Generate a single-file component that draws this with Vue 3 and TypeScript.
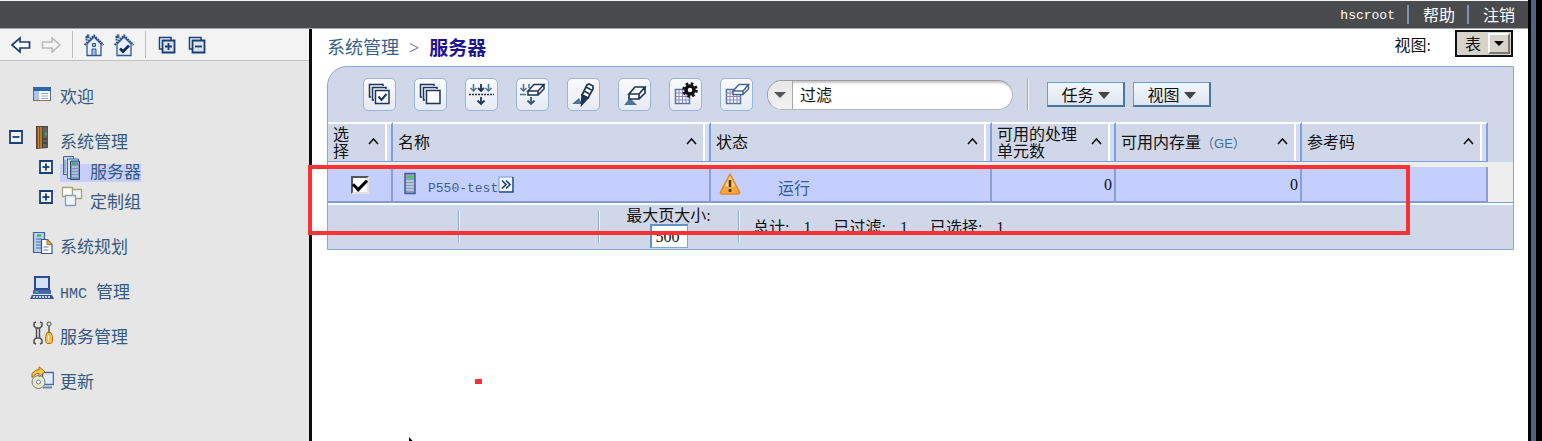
<script setup lang="ts">
import { ref } from 'vue'

interface NavItem {
  id: string
  label: string
  latin?: string
  level: 1 | 2
  expander?: 'plus' | 'minus'
  active?: boolean
}

interface Column {
  id: string
  label: string
  unit?: string
  width: number
}

const navItems: NavItem[] = [
  { id: 'welcome', label: '欢迎', level: 1 },
  { id: 'systems', label: '系统管理', level: 1, expander: 'minus' },
  { id: 'servers', label: '服务器', level: 2, expander: 'plus', active: true },
  { id: 'groups', label: '定制组', level: 2, expander: 'plus' },
  { id: 'plans', label: '系统规划', level: 1 },
  { id: 'hmc', latin: 'HMC', label: '管理', level: 1 },
  { id: 'service', label: '服务管理', level: 1 },
  { id: 'updates', label: '更新', level: 1 },
]

const tools = [
  { id: 'select-all', label: '全选' },
  { id: 'select-none', label: '取消全选' },
  { id: 'filter-row', label: '过滤行' },
  { id: 'clear-filter', label: '清除过滤' },
  { id: 'edit-sort', label: '编辑排序' },
  { id: 'clear-sort', label: '清除排序' },
  { id: 'columns', label: '配置列' },
  { id: 'reset-columns', label: '重置列' },
]

const columns: Column[] = [
  { id: 'select', label: '选择', width: 65 },
  { id: 'name', label: '名称', width: 318 },
  { id: 'status', label: '状态', width: 281 },
  { id: 'cpu', label: '可用的处理单元数', width: 124 },
  { id: 'memory', label: '可用内存量', unit: '（GE）', width: 186 },
  { id: 'code', label: '参考码', width: 186 },
]

const filterText = ref('过滤')
const pageSize = ref('500')
const selected = ref(true)
const view = ref('表')
</script>

<template>
  <div class="console">
    <div class="window">
      <header class="topbar">
        <span class="user">hscroot</span>
        <a href="#help">帮助</a>
        <a href="#logout">注销</a>
      </header>

      <div class="body">
        <aside class="sidebar">
          <div class="navbar">
            <button type="button" aria-label="后退">
              <svg width="20" height="18" viewBox="0 0 20 18"><path d="M1 9 9 2V6H18.500v6H9v4Z" fill="#fff" stroke="#173f76" stroke-width="1.700" /></svg>
            </button>
            <button type="button" aria-label="前进">
              <svg width="20" height="18" viewBox="0 0 20 18"><path d="M19 9 11 2V6H1.500v6H11v4Z" fill="#f4f4f4" stroke="#b9b9b9" stroke-width="1.500" /></svg>
            </button>
            <span class="rule"></span>
            <button type="button" aria-label="主页">
              <svg width="20" height="24" viewBox="1 0 20 24">
                <path d="M4 11v11.500h14V11l-7-7Z" fill="#e9f0fb" stroke="#31588e" stroke-width="1.300" />
                <path d="M1.500 12 11 2.500l9.500 9.500M3.500 7.500V2.500h2v3" fill="none" stroke="#31588e" stroke-width="2" stroke-dasharray="2 .6" />
                <path d="M9.500 10.500h3v3h-3zM9 16h4v6.500H9z" fill="#9db9e6" stroke="#31588e" />
              </svg>
            </button>
            <button type="button" aria-label="设为主页">
              <svg width="20" height="24" viewBox="1 0 20 24">
                <path d="M4 11v11.500h14V11l-7-7Z" fill="#e9f0fb" stroke="#31588e" stroke-width="1.300" />
                <path d="M1.500 12 11 2.500l9.500 9.500M3.500 7.500V2.500h2v3" fill="none" stroke="#31588e" stroke-width="2" stroke-dasharray="2 .6" />
                <path d="m7 15.500 3 3 6-6" fill="none" stroke="#12305f" stroke-width="2.800" />
              </svg>
            </button>
            <span class="rule"></span>
            <button type="button" aria-label="全部展开">
              <svg width="20" height="18" viewBox="-1 0 20 18">
                <path d="M4 13H1.500V1.500H13V4" fill="#fff" stroke="#173f76" stroke-width="1.500" />
                <path d="M4.500 4.500h12v12h-12z" fill="#dde1ea" stroke="#173f76" stroke-width="1.800" />
                <path d="M7 10.500h7M10.500 7v7" stroke="#173f76" stroke-width="1.800" />
              </svg>
            </button>
            <button type="button" aria-label="全部折叠">
              <svg width="20" height="18" viewBox="-1 0 20 18">
                <path d="M4 13H1.500V1.500H13V4" fill="#fff" stroke="#173f76" stroke-width="1.500" />
                <path d="M4.500 4.500h12v12h-12z" fill="#dde1ea" stroke="#173f76" stroke-width="1.800" />
                <path d="M7 10.500h7" stroke="#173f76" stroke-width="1.800" />
              </svg>
            </button>
          </div>

          <nav class="tree">
            <div v-for="item in navItems" :key="item.id" class="node" :class="'level-' + item.level">
              <button v-if="item.expander" type="button" class="expander" :aria-label="item.label">
                <svg width="14" height="14" viewBox="0 0 14 14">
                  <path d="M1 1h12v12H1z" fill="#f2f3f6" stroke="#173f76" stroke-width="1.800" />
                  <path d="M3.500 7h7" stroke="#173f76" stroke-width="1.800" />
                  <path v-if="item.expander === 'plus'" d="M7 3.500v7" stroke="#173f76" stroke-width="1.800" />
                </svg>
              </button>
              <span v-else class="expander"></span>
              <a :href="'#' + item.id" :class="{ active: item.active }">
                <svg width="24" height="24" viewBox="0 0 24 24" aria-hidden="true">
                  <g v-if="item.id === 'welcome'">
                    <path d="M3.500 6.500h17v13h-17z" fill="#fff" stroke="#55698a" />
                    <path d="M3 6h18v4H3z" fill="#2c65b1" />
                    <path d="M4 10h5v9H4z" fill="#a9c6ee" />
                    <path d="M11 12.500h7M11 15h7M11 17.500h7" stroke="#8aaee0" />
                    <path d="M3 19.500h18" stroke="#857a52" />
                  </g>
                  <g v-else-if="item.id === 'systems'">
                    <path d="M6 0h12v22l-12 1z" fill="#4b4542" />
                    <path d="M8.500 1v21M11 1v21" stroke="#d58a2c" stroke-width="1.500" />
                    <path d="M13 1h4.500v20.500H13z" fill="#63605f" />
                    <path d="M15 6.500h2v3h-2z" fill="#24b352" />
                    <path d="M13 13h4M13 17h4" stroke="#333" />
                  </g>
                  <g v-else-if="item.id === 'servers'">
                    <path d="M3.500.5h10v18h-10z" fill="#c3d5f3" stroke="#3d62a0" />
                    <path d="M7.500 3h11v19.500h-11z" fill="#d8e4fa" stroke="#3d62a0" />
                    <path d="M10.500 5h9v18.500h-9z" fill="#7f94ba" stroke="#2c4b85" />
                    <path d="M12 7.500h4" stroke="#26c832" stroke-width="2" />
                    <path d="M12 11h6M12 14h6M12 17h6M12 20h6" stroke="#dce6f7" />
                    <path d="M5 4v13" stroke="#5f7eb5" />
                  </g>
                  <g v-else-if="item.id === 'groups'" fill="#fff" stroke="#a7a476" stroke-width="1.300">
                    <path d="M2.500 1.500h10v9h-10z" />
                    <path d="M12.500 3.500h9v9h-9z" fill="#eef5ff" />
                    <path d="M5.500 9.500h10v10h-10z" fill="#eef5ff" stroke="#8d9cb0" />
                  </g>
                  <g v-else-if="item.id === 'plans'">
                    <path d="M3.500 1.500h11v20h-11z" fill="#b9cff0" stroke="#3d62a0" stroke-width="1.200" />
                    <path d="M7 4.500h4" stroke="#25b93a" stroke-width="2" />
                    <path d="M6 8h6M6 11h6M6 14h6M6 17h6" stroke="#4768a5" />
                    <path d="M11.500 8.500h6l4.500 5v9H11.500z" fill="#fff" stroke="#31588e" stroke-width="1.200" />
                    <path d="M17 8.500v5h5z" fill="#f2b744" stroke="#a97418" />
                    <path d="M13.500 16h5M13.500 19h5" stroke="#5a7cb5" />
                  </g>
                  <g v-else-if="item.id === 'hmc'">
                    <path d="M5 1h14v12H5z" fill="#d2e1f8" stroke="#2d4b95" stroke-width="2" />
                    <path d="M3 14h18v4H3z" fill="#4a66a8" />
                    <path d="M5 16h3" stroke="#28c93a" stroke-width="2" />
                    <path d="M2 19h20l2 4H0z" fill="#33539c" />
                    <path d="M3 21h18" stroke="#cbd8f2" stroke-width="2" stroke-dasharray="2 1" />
                  </g>
                  <g v-else-if="item.id === 'service'" fill="none">
                    <path d="M6 1 4 2v3l2 2h4l2-2V2l-2-1M6 23l-2-1v-3l2-2h4l2 2v3l-2 1M6.500 7v10M9.500 7v10" stroke="#4f4f4f" stroke-width="1.500" />
                    <circle cx="19" cy="3" r="2" stroke="#4f4f4f" />
                    <path d="M19 5v7" stroke="#555" stroke-width="1.500" />
                    <path d="M17 11.500h4l1.500 4v5l-1.500 2h-4l-1.500-2v-5z" fill="#f7bd45" stroke="#b3710c" />
                    <path d="M18.500 14v6" stroke="#fff3c0" />
                  </g>
                  <g v-else>
                    <path d="M12.500 6.500h11v12h-11z" fill="#dfeafb" stroke="#4b6dad" stroke-width="1.600" />
                    <path d="M13 21.500h9" stroke="#6d86b5" stroke-width="2" />
                    <circle cx="8.500" cy="16" r="6.500" fill="#e8eac8" stroke="#77817a" />
                    <circle cx="8.500" cy="16" r="2" fill="#fff" stroke="#5d79b0" />
                    <path d="M2 11.500V7.500L6 4h3V.8l6 5-6 5V7.500H6.500z" fill="#f9c64a" stroke="#a56c0e" />
                  </g>
                </svg>
                <span class="label"><span v-if="item.latin" class="latin">{{ item.latin }}&nbsp;</span>{{ item.label }}</span>
              </a>
            </div>
          </nav>
        </aside>

        <main class="content">
          <div class="heading">
            <div class="crumbs">
              <a href="#systems">系统管理</a>
              <span class="angle">&gt;</span>
              <strong>服务器</strong>
            </div>
            <label class="view-label" for="view">视图:</label>
            <div class="picker">
              <select id="view" v-model="view">
                <option>表</option>
              </select>
              <span class="picker-arrow"><i class="down small"></i></span>
            </div>
          </div>

          <section class="panel">
            <div class="toolbar">
              <div class="tools">
                <button v-for="tool in tools" :key="tool.id" type="button" class="tool" :aria-label="tool.label">
                  <svg width="27" height="27" viewBox="0 0 27 27" fill="none" stroke="#1f3557" stroke-width="1.500">
                    <g v-if="tool.id === 'select-all' || tool.id === 'select-none'">
                      <path d="M5 16H3.500V3.500H17V5" />
                      <path d="M8 19H6.500V6.500H20V8" />
                      <path d="M9.500 9.500h13.500v13h-13.500z" fill="#fff" />
                      <path v-if="tool.id === 'select-all'" d="m12.500 15.500 3 3.500 5-6" stroke-width="2" />
                    </g>
                    <g v-else-if="tool.id === 'filter-row'">
                      <path d="M5.500 3v7M2.500 7l3 3 3-3M20.500 3v7M17.500 7l3 3 3-3" stroke="#4d7298" />
                      <path d="M13 3v7M10 7l3 3 3-3M13 16v7M9.500 19.500l3.500 3.500 3.500-3.500" stroke-width="1.800" />
                      <path d="M1 13.500h25" stroke-dasharray="2 1" />
                    </g>
                    <g v-else-if="tool.id === 'clear-filter'">
                      <path d="M4.500 3v7M1.500 7l3 3 3-3M10 3v4M1 13.500h6" stroke="#4d7298" />
                      <path d="M12 16v7M8.500 19.500l3.500 3.500 3.500-3.500" stroke="#31577f" stroke-width="1.800" />
                      <path d="m9 10 6-6.500h10L19 10zM9 10v4h10v-4M19 14l6-6V3.500" fill="#fff" />
                    </g>
                    <g v-else-if="tool.id === 'edit-sort'">
                      <path d="M2 23l7-6 3 6z" fill="#4d7298" stroke="none" />
                      <path d="m12 14 5-10 2-1 4 2v3l-5 9z" fill="#fff" stroke-width="1.700" />
                      <path d="m12 14 6 3-6.500 7z" fill="#1f3557" />
                      <path d="m16 6 5.500 3M14 10l5.500 3" />
                    </g>
                    <g v-else-if="tool.id === 'clear-sort'">
                      <path d="M3 24l6-7 7 7z" fill="#4d7298" stroke="none" />
                      <path d="m8 13 6-7h10l-6 7zM8 13v5h10v-5M18 18l6-6V6" fill="#fff" stroke-width="1.700" />
                    </g>
                    <g v-else>
                      <path d="M3.500 8.500h14v14h-14z" fill="#fff" stroke="#55719c" />
                      <path d="M7 8.500v14M10.500 8.500v14M14 8.500v14M3.500 12h14M3.500 15.500h14M3.500 19h14" stroke="#8587c4" stroke-width="1" />
                      <g v-if="tool.id === 'columns'" stroke="#111">
                        <circle cx="18" cy="9" r="4" stroke-width="3.500" fill="#fff" />
                        <circle cx="18" cy="9" r="6.500" stroke-width="2.500" stroke-dasharray="2.600 2.500" />
                      </g>
                      <path v-else d="m10 10 6-6.500h9.500L20 10zM10 10v3.500h10V10M20 13.500l5.500-5.500V3.500" fill="#fff" stroke="#4a658c" />
                    </g>
                  </svg>
                </button>
              </div>
              <div class="search">
                <button type="button" aria-label="过滤选项"><i class="down"></i></button>
                <input v-model="filterText" type="text" aria-label="过滤" />
              </div>
              <div class="menus">
                <button type="button">任务<i class="down dark"></i></button>
                <button type="button">视图<i class="down dark"></i></button>
              </div>
            </div>

            <div class="grid-area">
              <table>
                <colgroup>
                  <col v-for="col in columns" :key="col.id" :style="{ width: col.width + 'px' }" />
                </colgroup>
                <thead>
                  <tr>
                    <th v-for="col in columns" :key="col.id" scope="col">
                      <div class="head">
                        <span>{{ col.label }}<span v-if="col.unit" class="unit">{{ col.unit }}</span></span>
                        <button type="button" :aria-label="'排序 ' + col.label">
                          <svg width="11" height="8" viewBox="0 0 11 8"><path d="m1 7 4.500-5L10 7" fill="none" stroke="#111" stroke-width="1.600" /></svg>
                        </button>
                      </div>
                    </th>
                  </tr>
                </thead>
                <tbody>
                  <tr class="gap"><td colspan="6"></td></tr>
                  <tr class="row">
                    <td class="center"><input v-model="selected" type="checkbox" aria-label="选择 P550-test" /></td>
                    <td>
                      <div class="name">
                        <svg width="12" height="24" viewBox="0 0 12 24">
                          <path d="M1 1.500h10v20H1z" fill="#8aa0c4" stroke="#435f8f" stroke-width="1.500" />
                          <path d="M3 5h6" stroke="#37d53f" stroke-width="2" />
                          <path d="M2 9h8M2 12h8M2 15h8M2 18h8" stroke="#dde6f6" />
                        </svg>
                        <a href="#p550">P550-test</a>
                        <button type="button" aria-label="打开菜单">
                          <svg width="16" height="17" viewBox="0 0 16 17">
                            <path d="M1 1h14v15H1z" fill="#f2f6fd" stroke="#7b98c5" />
                            <path d="M15 1v15H1" fill="none" stroke="#31588e" stroke-width="1.500" />
                            <path d="m4 4.500 4 4-4 4M8 4.500l4 4-4 4" fill="none" stroke="#1f4273" stroke-width="1.600" />
                          </svg>
                        </button>
                      </div>
                    </td>
                    <td>
                      <div class="status">
                        <svg width="22" height="24" viewBox="0 0 22 24">
                          <path d="M11 2 20.500 20q.5 2-1.500 2H3q-2 0-1.500-2Z" fill="#f9a832" stroke="#e0872a" stroke-width="1.500" stroke-linejoin="round" />
                          <path d="M11 4 6 14q5 2 10 0Z" fill="#ffd27a" />
                          <path d="M11 8v7M11 17v3" stroke="#4b3a1a" stroke-width="2.600" />
                        </svg>
                        <a href="#status">运行</a>
                      </div>
                    </td>
                    <td class="number">0</td>
                    <td class="number">0</td>
                    <td></td>
                  </tr>
                </tbody>
              </table>
            </div>

            <footer class="pager">
              <div class="cell"></div>
              <div class="cell"></div>
              <div class="cell size">
                <label for="page-size">最大页大小:</label>
                <input id="page-size" v-model="pageSize" type="text" />
              </div>
              <div class="totals">
                <span>总计:<b>1</b></span>
                <span>已过滤:<b>1</b></span>
                <span>已选择:<b>1</b></span>
              </div>
            </footer>
          </section>
        </main>
      </div>
    </div>

    <div class="frame"></div>
    <div class="outline"></div>
    <div class="dot"></div>
    <svg class="pointer" width="10" height="16" viewBox="0 0 10 16"><path d="M0 0v14l3-3 2 5 2-1-2-5h4z" fill="#000" /></svg>
  </div>
</template>

<style>
html,
body {
  margin: 0;
  overflow: hidden;
}
</style>

<style scoped>
* {
  box-sizing: border-box;
}
.console {
  position: relative;
  display: flex;
  min-height: 100vh;
  overflow: hidden;
  background: #fff;
  color: #111;
  font-family: "Liberation Serif", "Noto Sans CJK SC", serif;
  font-size: 16px;
  line-height: 17px;
}
button,
input,
select {
  margin: 0;
  padding: 0;
  border: 0;
  background: none;
  color: inherit;
  font: inherit;
}
a {
  color: inherit;
  text-decoration: none;
}
svg {
  display: block;
  flex: none;
}
.window {
  flex: 1;
  min-width: 0;
  display: flex;
  flex-direction: column;
}
.frame {
  flex: none;
  width: 14px;
  border: solid #000;
  border-width: 0 6px 0 3px;
  background: #4f6184;
}
.topbar {
  display: flex;
  align-items: center;
  justify-content: flex-end;
  height: 29px;
  padding-right: 13px;
  border-top: 1px solid #f5f5f5;
  border-bottom: 1px solid #a5a5a5;
  background: #4a4b4d;
  color: #fff;
}
.topbar a {
  margin-left: 12px;
  padding: 2px 0 0 14px;
  border-left: 2px solid #7d94b0;
}
.user {
  padding-top: 2px;
  font-family: "Liberation Mono", monospace;
  font-size: 13px;
}
.body {
  flex: 1;
  display: flex;
}
.sidebar {
  flex: none;
  width: 312px;
  border-right: 3px solid #0c0c0c;
  background: #e6e6e6;
}
.navbar {
  display: flex;
  align-items: center;
  gap: 10px;
  height: 32px;
  padding-left: 11px;
  border-bottom: 1px solid #c2c2c2;
  background: #f3f3f3;
}
.rule {
  width: 1px;
  height: 27px;
  margin: 0 1px;
  background: #bdbdbd;
}
.tree {
  padding-top: 20px;
}
.node {
  display: flex;
  gap: 7px;
  height: 30px;
  padding-left: 9px;
}
.level-2 {
  padding-left: 39px;
}
.level-1:not(:first-child),
.level-2 + .level-1 {
  margin-top: 15px;
}
.expander {
  flex: none;
  width: 14px;
  height: 14px;
  margin-top: 4px;
}
.node a {
  display: flex;
  gap: 6px;
  height: 30px;
  color: #355a83;
  font-size: 17px;
  line-height: 34px;
}
.node a.active {
  background: linear-gradient(#c6cffc, #c6cffc) 0 8px / 100% 18px no-repeat;
}
.latin {
  font-family: "Liberation Mono", monospace;
  font-size: 15px;
}
.content {
  flex: 1;
  min-width: 0;
  padding: 0 14px 0 15px;
}
.heading {
  display: flex;
  height: 37px;
  padding-right: 1px;
}
.crumbs {
  display: flex;
  flex: 1;
  align-items: center;
  gap: 10px;
  padding-top: 2px;
  color: #34608a;
  font-size: 18px;
}
.angle {
  color: #6a62ac;
}
.crumbs strong {
  color: #1d1391;
  font-size: 19px;
}
.view-label {
  padding-top: 8px;
}
.picker {
  position: relative;
  width: 58px;
  height: 27px;
  margin: 1px 0 0 24px;
}
.picker select {
  width: 100%;
  height: 100%;
  padding: 2px 0 0 8px;
  border: 2px solid #111;
  background: #d7d3cb;
  appearance: none;
}
.picker-arrow {
  position: absolute;
  top: 3px;
  right: 3px;
  display: flex;
  align-items: center;
  justify-content: center;
  width: 22px;
  height: 21px;
  border: 2px solid;
  border-color: #fff #777 #777 #fff;
  background: #d7d3cb;
  pointer-events: none;
}
.down {
  border: 6px solid transparent;
  border-top: 6px solid #555;
  border-bottom: 0;
}
.down.dark {
  border-top: 7px solid #444;
}
.down.small {
  border-width: 5px 5px 0;
  border-top-color: #000;
}
.panel {
  border: 1px solid #89a7d6;
  border-radius: 20px 0 0 0;
  background: #d0d7e8;
}
.toolbar {
  display: flex;
  align-items: center;
  height: 55px;
  padding-left: 35px;
}
.tools {
  display: flex;
  gap: 18px;
}
.tool {
  display: grid;
  place-items: center;
  width: 33px;
  height: 33px;
  border: 1px solid #98b4d8;
  border-radius: 5px;
  background: linear-gradient(#fafbfd, #e6eaf4);
}
.search {
  display: flex;
  width: 246px;
  height: 30px;
  margin-left: 14px;
  overflow: hidden;
  border: 1px solid #9a9a9a;
  border-right-color: #b5b5b5;
  border-bottom-color: #b5b5b5;
  border-radius: 15px;
  background: #fff;
  box-shadow: inset 1px 2px 2px #c8c8c8;
}
.search button {
  display: grid;
  place-items: center;
  width: 25px;
  border-right: 1px solid #a5a5a5;
  background: linear-gradient(#e8e8e8, #f1f1f1);
}
.search input {
  flex: 1;
  min-width: 0;
  padding: 2px 0 0 7px;
}
.menus {
  display: flex;
  align-items: center;
  gap: 8px;
  height: 32px;
  margin-left: 14px;
  padding-left: 19px;
  border-left: 1px solid #8fabd0;
  box-shadow: inset 1px 0 #f4f7fc;
}
.menus button {
  display: flex;
  align-items: center;
  justify-content: center;
  gap: 4px;
  width: 78px;
  height: 25px;
  padding-top: 2px;
  border: 1px solid #66a0cc;
  border-right: 2px solid #47779f;
  border-bottom: 2px solid #47779f;
  background: linear-gradient(#f3f6fb, #dfe6f2);
}
.grid-area {
  background: linear-gradient(#d0d7e8, #d0d7e8) 0 0 / 100% 40px no-repeat #eeeeef;
  padding-right: 26px;
  border-bottom: 1px solid #7e9bd4;
}
table {
  width: 100%;
  table-layout: fixed;
  border-collapse: separate;
  border-spacing: 0;
}
th,
td {
  padding: 0;
}
th {
  height: 40px;
  border-top: 2px solid #fbfcff;
  border-right: 2px solid #7f9fdc;
  border-bottom: 1px solid #7f9fdc;
  background: #d0d7e8;
  font-weight: 400;
  text-align: left;
}
.head {
  display: flex;
  align-items: center;
  justify-content: space-between;
  gap: 6px;
  height: 37px;
  padding: 0 12px 0 5px;
  background: linear-gradient(90deg, #fff 2px, #d3ddf2 2px) right / 6px 100% no-repeat;
}
.unit {
  color: #3f6f9f;
  font-family: "Liberation Sans", "Noto Sans CJK SC", sans-serif;
  font-size: 13px;
  white-space: nowrap;
}
.head svg {
  margin-bottom: 3px;
}
.gap td {
  height: 5px;
  background: #eeeeef;
}
.row td {
  height: 35px;
  border-right: 2px solid #8a9fd8;
  border-bottom: 1px solid #7e9bd4;
  background: #c4cffe;
}
.center {
  text-align: center;
}
.center input {
  display: inline-grid;
  place-items: center;
  width: 18px;
  height: 18px;
  border: 2px solid;
  border-color: #555 #e5e1d8 #e5e1d8 #555;
  background: #fff;
  appearance: none;
  vertical-align: middle;
}
.center input:checked::before {
  content: "";
  width: 11px;
  height: 6px;
  border: solid #000;
  border-width: 0 0 3px 3px;
  transform: translateY(-1px) rotate(-45deg);
}
.name {
  display: flex;
  align-items: center;
  padding-left: 11px;
  color: #3b5f96;
  font-family: "Liberation Mono", monospace;
  font-size: 13px;
}
.name a {
  padding: 8px 0 0 12px;
}
.status {
  display: flex;
  align-items: center;
  gap: 37px;
  padding-left: 8px;
  color: #2f5f97;
}
.status a {
  padding-top: 8px;
}
.row .number {
  padding-right: 2px;
  text-align: right;
}
.pager {
  display: flex;
  height: 46px;
  border-top: 2px solid #fbfcff;
}
.cell {
  flex: none;
  width: 140px;
  margin: 6px 0;
  border-right: 1px solid #8fabd0;
  box-shadow: 1px 0 #f4f7fc;
}
.cell:first-child {
  width: 131px;
}
.size {
  display: flex;
  flex-direction: column;
  align-items: center;
}
.size label {
  margin-top: -4px;
}
.size input {
  flex: none;
  width: 38px;
  height: 24px;
  border: 1px solid #7fa6d0;
  border-top: 2px solid #5f93c6;
  border-left: 2px solid #5f93c6;
  background: #fff;
  padding-left: 4px;
}
.totals {
  display: flex;
  align-items: center;
  gap: 22px;
  padding-left: 14px;
}
.totals b {
  margin-left: 14px;
  font-weight: 400;
}
.outline {
  position: absolute;
  top: 165px;
  right: 132px;
  left: 308px;
  height: 70px;
  border: 4px solid #fc3134;
  pointer-events: none;
}
.dot {
  position: absolute;
  top: 379px;
  left: 475px;
  width: 7px;
  height: 5px;
  background: #fc3134;
}
.pointer {
  position: absolute;
  top: 437px;
  left: 409px;
}
</style>
